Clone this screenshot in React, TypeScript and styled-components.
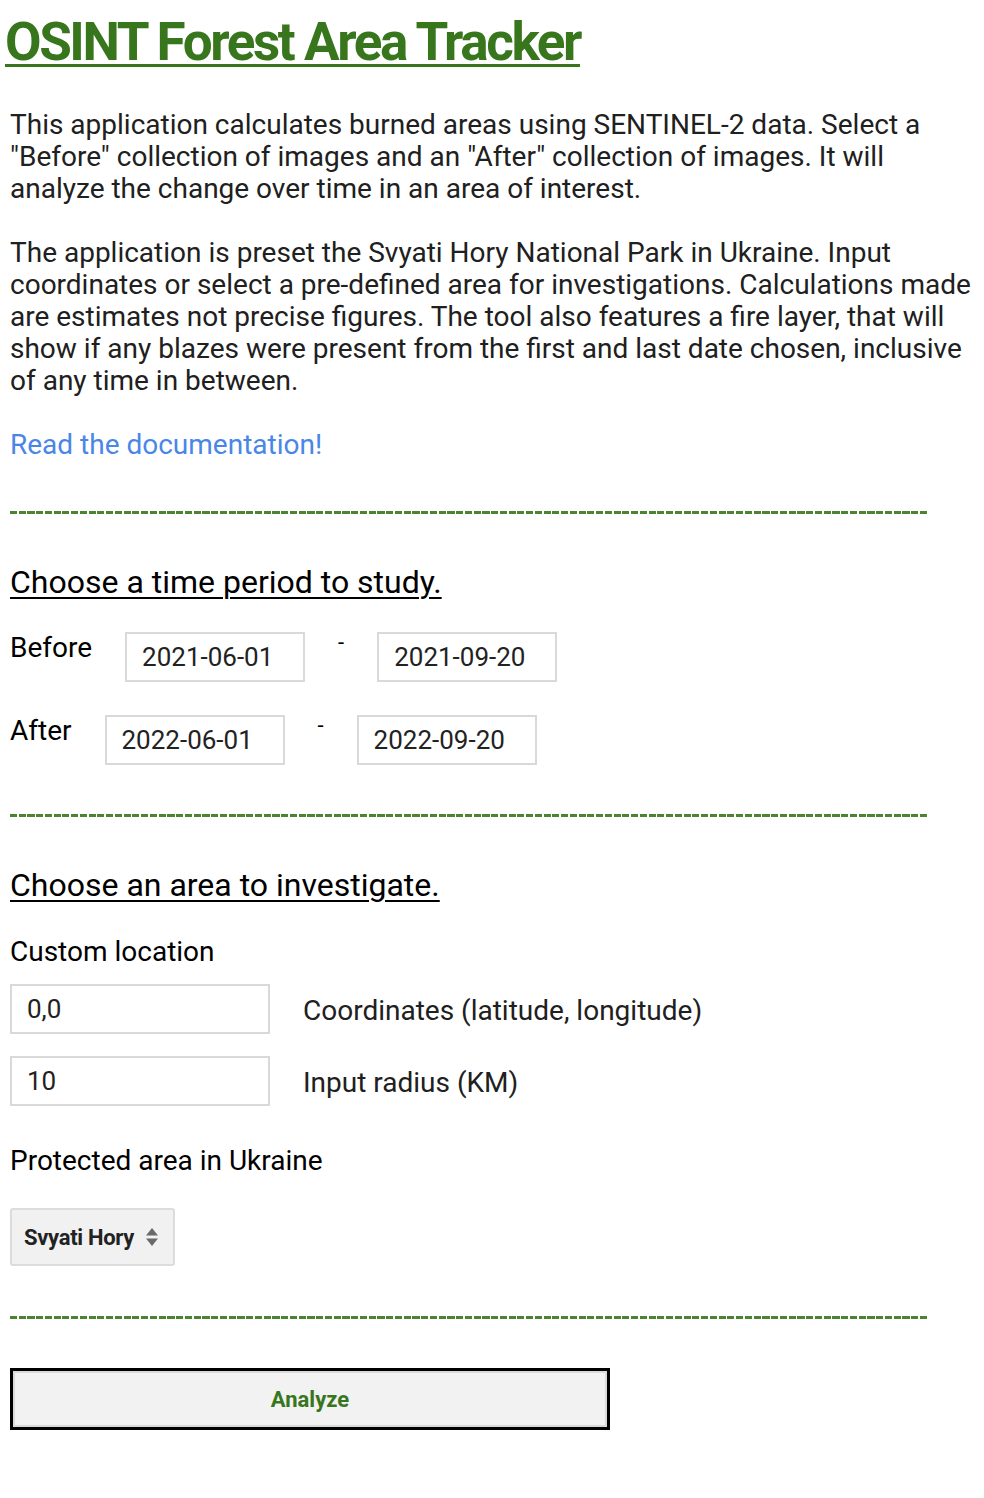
import React from "react";
import styled, { createGlobalStyle } from "styled-components";

const GlobalStyle = createGlobalStyle`
  html, body {
    margin: 0;
    padding: 0;
    background: #ffffff;
  }
  body {
    font-family: Roboto, "Liberation Sans", Arial, sans-serif;
    color: #000000;
  }
`;

const GREEN = "#38761d";

const Page = styled.div`
  width: 984px;
  min-height: 1498px;
  box-sizing: border-box;
  padding: 10px 10px 0 10px;
  display: flex;
  flex-direction: column;
`;

const Title = styled.h1`
  margin: 0 0 0 -5px;
  font-family: Roboto, "Liberation Sans", sans-serif;
  font-weight: 700;
  font-size: 53px;
  line-height: 64px;
  letter-spacing: -2.4px;
  color: ${GREEN};
  text-decoration: underline;
  text-decoration-thickness: 3px;
  text-underline-offset: 4px;
`;

const Paragraph = styled.p<{ $top: number }>`
  margin: ${(p) => p.$top}px 0 0 0;
  font-size: 28px;
  line-height: 32px;
  color: #202020;
`;

const DocLink = styled.a`
  display: block;
  margin-top: 32px;
  font-size: 28px;
  line-height: 32px;
  color: #4a86e8;
  text-decoration: none;
`;

const Divider = styled.div<{ $top: number }>`
  margin-top: ${(p) => p.$top}px;
  width: 918px;
  height: 3px;
  background: repeating-linear-gradient(
    90deg,
    ${GREEN} 0 7px,
    transparent 7px 8.75px
  );
  opacity: 0.9;
`;

const Heading = styled.h2`
  margin: 50px 0 0 0;
  font-weight: 400;
  font-size: 32px;
  line-height: 36px;
  text-decoration: underline;
  text-decoration-thickness: 2px;
  text-underline-offset: 4px;
  color: #000000;
`;

const DateRow = styled.div<{ $top: number }>`
  display: flex;
  align-items: flex-start;
  gap: 33px;
  margin-top: ${(p) => p.$top}px;
`;

const RowLabel = styled.span`
  font-size: 28px;
  line-height: 32px;
  color: #000000;
`;

const Dash = styled.span`
  font-size: 22px;
  line-height: 22px;
  color: #000000;
`;

const Field = styled.input<{ $width: number }>`
  box-sizing: border-box;
  width: ${(p) => p.$width}px;
  height: 50px;
  padding: 0 0 0 15px;
  border: 2px solid #d9d9d9;
  border-radius: 0;
  background: #ffffff;
  font-family: Roboto, "Liberation Sans", sans-serif;
  font-size: 26px;
  color: #222222;
  outline: none;
`;

const SubLabel = styled.div<{ $top: number }>`
  margin-top: ${(p) => p.$top}px;
  font-size: 28px;
  line-height: 32px;
  color: #000000;
`;

const FieldRow = styled.div<{ $top: number }>`
  display: flex;
  align-items: center;
  gap: 33px;
  margin-top: ${(p) => p.$top}px;
`;

const FieldHint = styled.span`
  font-size: 28px;
  line-height: 32px;
  color: #202020;
  padding-top: 3px;
`;

const SelectBox = styled.div`
  box-sizing: border-box;
  margin-top: 31px;
  width: 165px;
  height: 58px;
  display: flex;
  align-items: center;
  gap: 10px;
  padding: 0 10px 0 12px;
  background: #f1f1f1;
  border: 2px solid #dcdcdc;
  border-radius: 3px;
  font-weight: 700;
  font-size: 22px;
  letter-spacing: -0.3px;
  white-space: nowrap;
  color: #222222;
`;

const Arrows = styled.svg`
  flex: none;
`;

const AnalyzeButton = styled.button`
  box-sizing: border-box;
  margin-top: 49px;
  width: 600px;
  height: 62px;
  border: 3px solid #000000;
  background: #f2f2f2;
  box-shadow: inset 0 0 0 2px #dadada;
  font-family: Roboto, "Liberation Sans", sans-serif;
  font-weight: 700;
  font-size: 22px;
  color: ${GREEN};
  cursor: pointer;
`;

export default function App() {
  return (
    <Page>
      <GlobalStyle />
      <Title>OSINT Forest Area Tracker</Title>
      <Paragraph $top={35}>
        This application calculates burned areas using SENTINEL-2 data. Select a
        "Before" collection of images and an "After" collection of images. It will
        analyze the change over time in an area of interest.
      </Paragraph>
      <Paragraph $top={32}>
        The application is preset the Svyati Hory National Park in Ukraine. Input
        coordinates or select a pre-defined area for investigations. Calculations
        made are estimates not precise figures. The tool also features a fire
        layer, that will show if any blazes were present from the first and last
        date chosen, inclusive of any time in between.
      </Paragraph>
      <DocLink href="#">Read the documentation!</DocLink>
      <Divider $top={50} />

      <Heading>Choose a time period to study.</Heading>
      <DateRow $top={32}>
        <RowLabel>Before</RowLabel>
        <Field $width={180} defaultValue="2021-06-01" />
        <Dash>-</Dash>
        <Field $width={180} defaultValue="2021-09-20" />
      </DateRow>
      <DateRow $top={33}>
        <RowLabel>After</RowLabel>
        <Field $width={180} defaultValue="2022-06-01" />
        <Dash>-</Dash>
        <Field $width={180} defaultValue="2022-09-20" />
      </DateRow>
      <Divider $top={49} />

      <Heading>Choose an area to investigate.</Heading>
      <SubLabel $top={33}>Custom location</SubLabel>
      <FieldRow $top={16}>
        <Field $width={260} defaultValue="0,0" />
        <FieldHint>Coordinates (latitude, longitude)</FieldHint>
      </FieldRow>
      <FieldRow $top={22}>
        <Field $width={260} defaultValue="10" />
        <FieldHint>Input radius (KM)</FieldHint>
      </FieldRow>
      <SubLabel $top={39}>Protected area in Ukraine</SubLabel>
      <SelectBox>
        <span>Svyati Hory</span>
        <Arrows width="16" height="24" viewBox="0 0 16 24">
          <path d="M8 3 L14 10.5 L2 10.5 Z" fill="#6a6a6a" />
          <path d="M8 21 L14 13.5 L2 13.5 Z" fill="#6a6a6a" />
        </Arrows>
      </SelectBox>
      <Divider $top={50} />
      <AnalyzeButton>Analyze</AnalyzeButton>
    </Page>
  );
}
